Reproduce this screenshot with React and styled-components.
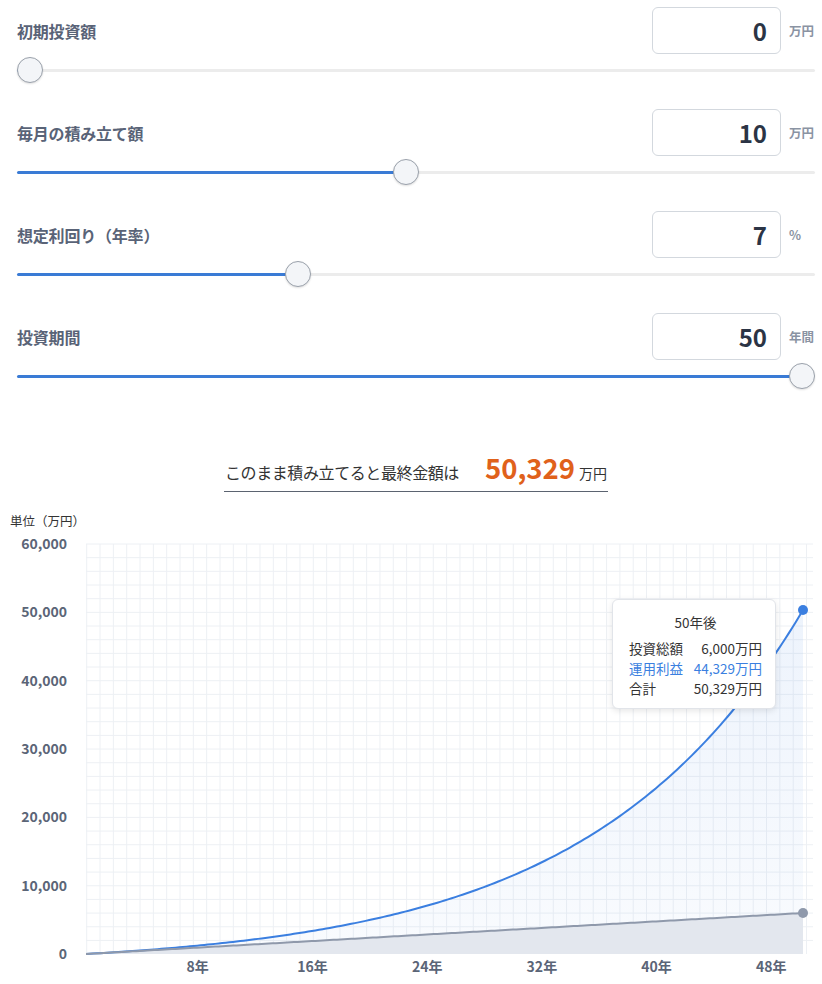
import React from 'react';
import styled, { createGlobalStyle } from 'styled-components';

const GlobalStyle = createGlobalStyle`
  html, body {
    margin: 0;
    padding: 0;
    background: #ffffff;
  }
  body {
    font-family: "Noto Sans CJK JP", "Noto Sans", sans-serif;
    color: #333333;
  }
`;

const Page = styled('div')`
  width: 822px;
  background: #ffffff;
`;

const Controls = styled('div')`
  padding: 7px 7px 0 17px;
  display: flex;
  flex-direction: column;
  gap: 26px;
`;

const Field = styled('div')`
  display: flex;
  flex-direction: column;
`;

const FieldHeader = styled('div')`
  display: flex;
  align-items: center;
  justify-content: space-between;
  height: 47px;
`;

const Label = styled('span')`
  font-size: 16px;
  font-weight: 700;
  color: #596377;
  letter-spacing: -0.2px;
`;

const InputGroup = styled('div')`
  display: flex;
  align-items: center;
  gap: 8px;
`;

const NumberBox = styled('input')`
  box-sizing: border-box;
  width: 129px;
  height: 47px;
  border: 1px solid #d3d8de;
  border-radius: 6px;
  padding: 0 13px;
  font-family: "Noto Sans CJK JP", "Noto Sans", sans-serif;
  font-size: 24px;
  font-weight: 700;
  color: #2b3445;
  text-align: right;
  background: #ffffff;
  outline: none;
`;

const Unit = styled('span')`
  width: 26px;
  font-size: 12.5px;
  font-weight: 700;
  color: #8a93a3;
  white-space: nowrap;
`;

const Slider = styled('input')`
  -webkit-appearance: none;
  appearance: none;
  display: block;
  width: 100%;
  height: 26px;
  margin: 3px 0 0;
  background: transparent;

  &::-webkit-slider-runnable-track {
    height: 3px;
    border-radius: 2px;
    background: linear-gradient(
      to right,
      #3a7bd5 0,
      #3a7bd5 var(--fill),
      #ececec var(--fill),
      #ececec 100%
    );
  }

  &::-webkit-slider-thumb {
    -webkit-appearance: none;
    width: 26px;
    height: 26px;
    margin-top: -11.5px;
    border-radius: 50%;
    border: 1px solid #9aa1ab;
    box-sizing: border-box;
    background: #f3f5f8;
    box-shadow: 0 1px 2px rgba(0, 0, 0, 0.12);
  }
`;

const SummaryRow = styled('div')`
  display: flex;
  justify-content: center;
  padding: 0 7px 0 17px;
  margin-top: 58px;
`;

const Summary = styled('div')`
  display: inline-flex;
  align-items: baseline;
  padding: 0 1px 4px;
  border-bottom: 1px solid #5b6370;
`;

const SummaryText = styled('span')`
  font-size: 16px;
  color: #333333;
  letter-spacing: -0.4px;
`;

const Total = styled('span')`
  margin-left: 26px;
  font-size: 27.5px;
  font-weight: 700;
  color: #e0611b;
`;

const TotalUnit = styled('span')`
  margin-left: 4px;
  font-size: 14px;
  color: #333333;
`;

const ChartSection = styled('div')`
  margin-top: 21px;
`;

const ChartCaption = styled('div')`
  padding-left: 10px;
  font-size: 12.5px;
  line-height: 16px;
  color: #333333;
`;

const ChartWrap = styled('div')`
  position: relative;
  height: 454px;

  svg {
    display: block;
  }
`;

const Tooltip = styled('div')`
  position: absolute;
  left: 612px;
  top: 70px;
  box-sizing: border-box;
  width: 164px;
  padding: 12px 13px 10px 16px;
  background: #ffffff;
  border: 1px solid #e1e4e9;
  border-radius: 6px;
  box-shadow: 0 2px 6px rgba(0, 0, 0, 0.1);
  font-size: 13.5px;
  line-height: 20px;
  color: #333333;
`;

const TooltipTitle = styled('div')`
  text-align: center;
  margin-bottom: 6px;
`;

const TooltipRow = styled('div')`
  display: flex;
  justify-content: space-between;
  color: ${(p) => (p.$accent ? '#3b7fe0' : '#333333')};
`;

const fields = [
  { label: '初期投資額', value: 0, unit: '万円', ratio: 0 },
  { label: '毎月の積み立て額', value: 10, unit: '万円', ratio: 0.487 },
  { label: '想定利回り（年率）', value: 7, unit: '%', ratio: 0.347 },
  { label: '投資期間', value: 50, unit: '年間', ratio: 1 },
];

// chart geometry (svg coordinates)
const X0 = 86;
const X1 = 803;
const GRID_R = 813;
const Y_TOP = 15;
const Y_BOT = 425;
const MAX = 60000;
const YEARS = 50;

const monthlyRate = Math.pow(1.07, 1 / 12) - 1;
const future = (y) => (10 * (Math.pow(1.07, y) - 1)) / monthlyRate;
const principal = (y) => 120 * y;

const px = (y) => X0 + (y / YEARS) * (X1 - X0);
const py = (v) => Y_BOT - (v / MAX) * (Y_BOT - Y_TOP);

const buildLine = (fn) => {
  const pts = [];
  for (let i = 0; i <= YEARS * 4; i++) {
    const y = i / 4;
    pts.push(`${px(y).toFixed(2)},${py(fn(y)).toFixed(2)}`);
  }
  return pts;
};

const growthLine = 'M' + buildLine(future).join(' L');
const baseLine = 'M' + buildLine(principal).join(' L');
const growthArea = `${growthLine} L${X1},${Y_BOT} L${X0},${Y_BOT} Z`;
const baseArea = `${baseLine} L${X1},${Y_BOT} L${X0},${Y_BOT} Z`;

const yTicks = [0, 10000, 20000, 30000, 40000, 50000, 60000];
const xTicks = [8, 16, 24, 32, 40, 48];

const Chart = () => {
  const vLines = [];
  for (let x = X0 + 0.7; x <= GRID_R; x += 13.33) vLines.push(x);
  const hLines = [];
  for (let y = Y_TOP; y <= Y_BOT; y += 13.67) hLines.push(y);

  return (
    <svg width="822" height="454" viewBox="0 0 822 454">
      <defs>
        <linearGradient id="growthFill" x1="0" y1="0" x2="0" y2="1">
          <stop offset="0" stopColor="#3b7fe0" stopOpacity="0.09" />
          <stop offset="1" stopColor="#3b7fe0" stopOpacity="0.03" />
        </linearGradient>
      </defs>
      <g stroke="#edf0f4" strokeWidth="1">
        {vLines.map((x) => (
          <line key={`v${x}`} x1={x} x2={x} y1={Y_TOP} y2={Y_BOT} />
        ))}
        {hLines.map((y) => (
          <line key={`h${y}`} x1={X0} x2={GRID_R} y1={y} y2={y} />
        ))}
      </g>
      <path d={growthArea} fill="url(#growthFill)" />
      <path d={baseArea} fill="#e3e7ee" />
      <path d={growthLine} fill="none" stroke="#3b7fe0" strokeWidth="2" />
      <path d={baseLine} fill="none" stroke="#8f99ab" strokeWidth="2" />
      <circle cx={X1} cy={py(future(YEARS))} r="5" fill="#3b7fe0" />
      <circle cx={X1} cy={py(principal(YEARS))} r="5" fill="#8f99ab" />
      <g
        fontFamily='"Noto Sans CJK JP", "Noto Sans", sans-serif'
        fontSize="14"
        fontWeight="700"
        fill="#5b6577"
      >
        {yTicks.map((v) => (
          <text key={v} x="67" y={py(v) + 5} textAnchor="end">
            {v.toLocaleString('en-US')}
          </text>
        ))}
        {xTicks.map((t) => (
          <text key={t} x={px(t) - 3} y="443" textAnchor="middle">
            {t}年
          </text>
        ))}
      </g>
    </svg>
  );
};

const App = () => {
  return (
    <Page>
      <GlobalStyle />
      <Controls>
        {fields.map((f) => (
          <Field key={f.label}>
            <FieldHeader>
              <Label>{f.label}</Label>
              <InputGroup>
                <NumberBox type="text" value={f.value} readOnly />
                <Unit>{f.unit}</Unit>
              </InputGroup>
            </FieldHeader>
            <Slider
              type="range"
              min="0"
              max="1000"
              value={Math.round(f.ratio * 1000)}
              readOnly
              style={{ '--fill': `calc(13px + (100% - 26px) * ${f.ratio})` }}
            />
          </Field>
        ))}
      </Controls>
      <SummaryRow>
        <Summary>
          <SummaryText>このまま積み立てると最終金額は</SummaryText>
          <Total>50,329</Total>
          <TotalUnit>万円</TotalUnit>
        </Summary>
      </SummaryRow>
      <ChartSection>
        <ChartCaption>単位（万円）</ChartCaption>
        <ChartWrap>
          <Chart />
          <Tooltip>
            <TooltipTitle>50年後</TooltipTitle>
            <TooltipRow>
              <span>投資総額</span>
              <span>6,000万円</span>
            </TooltipRow>
            <TooltipRow $accent>
              <span>運用利益</span>
              <span>44,329万円</span>
            </TooltipRow>
            <TooltipRow>
              <span>合計</span>
              <span>50,329万円</span>
            </TooltipRow>
          </Tooltip>
        </ChartWrap>
      </ChartSection>
    </Page>
  );
};

export default App;
